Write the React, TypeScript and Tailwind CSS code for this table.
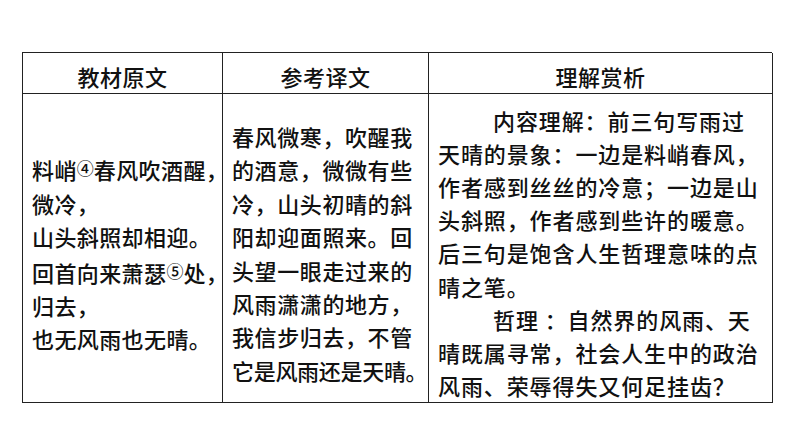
import React from 'react';

const font = { fontFamily: '"Noto Sans CJK SC", "Noto Sans", sans-serif' };

const Note: React.FC<{ n: string }> = ({ n }) => (
    <span className="text-[17px] align-[4px] tracking-normal">{n}</span>
);

const originalLines: React.ReactNode[] = [
    <>料峭<Note n="④" />春风吹酒醒，</>,
    '微冷，',
    '山头斜照却相迎。',
    <>回首向来萧瑟<Note n="⑤" />处，</>,
    '归去，',
    '也无风雨也无晴。',
];

const translationLines = [
    '春风微寒，吹醒我',
    '的酒意，微微有些',
    '冷，山头初晴的斜',
    '阳却迎面照来。回',
    '头望一眼走过来的',
    '风雨潇潇的地方，',
    '我信步归去，不管',
    '它是风雨还是天晴。',
];

const analysisLines: { text: string; indent?: boolean }[] = [
    { text: '内容理解：前三句写雨过', indent: true },
    { text: '天晴的景象：一边是料峭春风，' },
    { text: '作者感到丝丝的冷意；一边是山' },
    { text: '头斜照，作者感到些许的暖意。' },
    { text: '后三句是饱含人生哲理意味的点' },
    { text: '晴之笔。' },
    { text: '哲理 ：自然界的风雨、天', indent: true },
    { text: '晴既属寻常，社会人生中的政治' },
    { text: '风雨、荣辱得失又何足挂齿？' },
];

const headers = ['教材原文', '参考译文', '理解赏析'];

const App: React.FC = () => {
    return (
        <div className="w-[794px] h-[447px] bg-white text-[#111] font-medium pt-[52px] pl-[22px]" style={font}>
            <div className="grid grid-cols-[200px_206px_344px] grid-rows-[41px_309px] w-[750px] border-t-[1.5px] border-l-[1.5px] border-[#222]">
                {headers.map((h) => (
                    <div
                        key={h}
                        className="flex items-center justify-center pt-[7px] text-[22px] tracking-[0.5px] border-r-[1.5px] border-b-[1.5px] border-[#222]"
                    >
                        {h}
                    </div>
                ))}

                <div className="flex flex-col justify-center pl-[9px] pt-[11px] text-[22px] leading-[33.4px] tracking-[0.4px] border-r-[1.5px] border-b-[1.5px] border-[#222] whitespace-nowrap">
                    {originalLines.map((line, i) => (
                        <div key={i}>{line}</div>
                    ))}
                </div>

                <div className="flex flex-col justify-center pl-[9px] pt-[11px] text-[22px] leading-[33.4px] tracking-[0.6px] border-r-[1.5px] border-b-[1.5px] border-[#222] whitespace-nowrap">
                    {translationLines.map((line, i) => (
                        <div key={i} className={i === translationLines.length - 1 ? 'tracking-[-0.3px]' : ''}>
                            {line}
                        </div>
                    ))}
                </div>

                <div className="flex flex-col justify-center pl-[9px] pt-[10px] text-[22px] leading-[33.2px] tracking-[0.9px] border-r-[1.5px] border-b-[1.5px] border-[#222] whitespace-nowrap">
                    {analysisLines.map((line, i) => (
                        <div key={i} className={line.indent ? 'pl-[55px]' : ''}>
                            {line.text}
                        </div>
                    ))}
                </div>
            </div>
        </div>
    );
};

export default App;
